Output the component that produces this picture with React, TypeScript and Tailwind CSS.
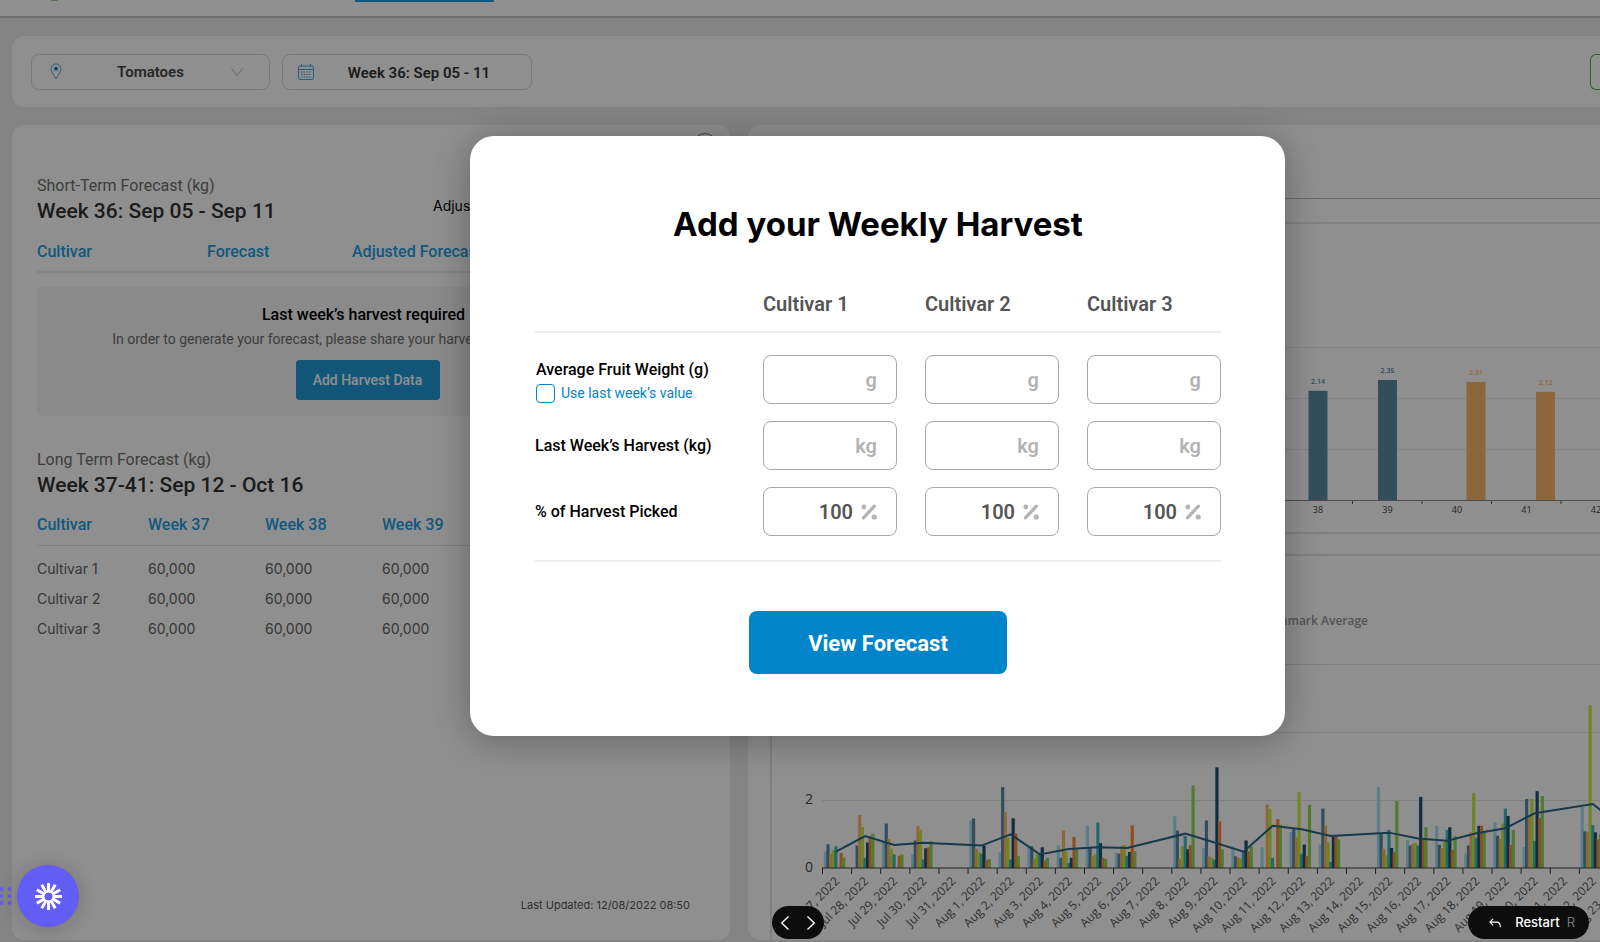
import React, { useState } from 'react';

const FONT_ROBOTO = "font-['Roboto','Liberation_Sans',sans-serif]";
const FONT_INTER = "font-['Inter','Liberation_Sans',sans-serif]";

const CULTIVARS = ['Cultivar 1', 'Cultivar 2', 'Cultivar 3'];
const WEEKS = ['Week 37', 'Week 38', 'Week 39', 'Week 40', 'Week 41'];

const SERIES_COLORS = ['#a6dff0', '#598ba6', '#fcb86b', '#c4ed3e', '#40bbc1', '#1e526e', '#ff8b3e', '#92da59'];

// one entry per day: value of every series, and the average line
const DAILY: { label: string; values: number[]; avg?: number }[] = [
    { label: 'Jul 27, 2022', values: [0.48, 0.7, 0.42, 0.52, 0.64, 0, 0.44, 0.3], avg: 0.48 },
    { label: 'Jul 28, 2022', values: [0, 0.66, 1.56, 1.2, 0.3, 0.75, 0.93, 1.01], avg: 0.94 },
    { label: 'Jul 29, 2022', values: [0.79, 1.31, 0.85, 0.57, 0.4, 0, 0.36, 0.4], avg: 0.68 },
    { label: 'Jul 30, 2022', values: [0.4, 0.81, 1.23, 1.13, 0.25, 0.58, 0.61, 0.79], avg: 0.74 },
    { label: 'Jul 31, 2022', values: [] },
    { label: 'Aug 1, 2022', values: [1.4, 1.46, 0.57, 0.48, 0.42, 0.66, 0.24, 0.26], avg: 0.66 },
    { label: 'Aug 2, 2022', values: [0.46, 2.38, 1.65, 0.89, 0.25, 1.46, 1.01, 0.36], avg: 0.99 },
    { label: 'Aug 3, 2022', values: [0.64, 0.64, 0.26, 0.4, 0.4, 0.61, 0.22, 0.3], avg: 0.4 },
    { label: 'Aug 4, 2022', values: [0.67, 0.3, 1.1, 0.48, 0.15, 0.3, 0.91, 0.54], avg: 0.56 },
    { label: 'Aug 5, 2022', values: [1.25, 0.6, 0.34, 0.4, 1.34, 0.73, 0.3, 0.27], avg: 0.61 },
    { label: 'Aug 6, 2022', values: [0.45, 0.42, 0.64, 0.67, 0.36, 0.47, 1.25, 0.49], avg: 0.59 },
    { label: 'Aug 7, 2022', values: [] },
    { label: 'Aug 8, 2022', values: [1.52, 1.1, 0.27, 0.64, 0.94, 0.55, 0.67, 2.43], avg: 1.01 },
    { label: 'Aug 9, 2022', values: [0.58, 1.4, 0.34, 0.3, 0.25, 2.96, 1.37, 0.55], avg: 0.75 },
    { label: 'Aug 10, 2022', values: [0.64, 0.34, 0.3, 0.27, 0.48, 0.81, 0.49, 0.64], avg: 0.48 },
    { label: 'Aug 11, 2022', values: [0.61, 0, 1.86, 1.74, 0.3, 0, 1.44, 1.27], avg: 1.24 },
    { label: 'Aug 12, 2022', values: [1.06, 1.16, 0.91, 2.23, 0.42, 0.69, 0.36, 1.86], avg: 1.14 },
    { label: 'Aug 13, 2022', values: [0.69, 1.75, 1.25, 0.76, 0.18, 0.92, 0.92, 0.84], avg: 0.94 },
    { label: 'Aug 14, 2022', values: [] },
    { label: 'Aug 15, 2022', values: [2.38, 1.02, 0.56, 0.37, 1.12, 0.59, 0.47, 1.97], avg: 1.04 },
    { label: 'Aug 16, 2022', values: [0.82, 0.66, 0.71, 0.74, 0.66, 2.09, 0.84, 1.2], avg: 0.87 },
    { label: 'Aug 17, 2022', values: [1.24, 0.68, 0.59, 0.8, 1.12, 1.2, 0.53, 0.94], avg: 0.8 },
    { label: 'Aug 18, 2022', values: [0.43, 0.66, 1.05, 2.21, 0.89, 1.24, 1.24, 1.05], avg: 1.02 },
    { label: 'Aug 19, 2022', values: [1.34, 0.95, 0.86, 1.31, 1.75, 1.53, 0.68, 1.12], avg: 1.17 },
    { label: 'Aug 20, 2022', values: [0.62, 2.03, 1.51, 2.03, 0.8, 2.26, 1.48, 2.12], avg: 1.61 },
    { label: 'Aug 21, 2022', values: [] },
    { label: 'Aug 22, 2022', values: [1.8, 1.08, 1.05, 4.79, 1.26, 1.05, 0.84, 1], avg: 1.88 },
    { label: 'Aug 23, 2022', values: [], avg: 1.2 },
];

const WEEKLY = [
    { week: 38, value: 2.14, color: '#598ba6', shift: 0 },
    { week: 39, value: 2.35, color: '#598ba6', shift: 0 },
    { week: 40, value: 2.31, color: '#fcb86b', shift: 19 },
    { week: 41, value: 2.12, color: '#fcb86b', shift: 19 },
    { week: 42, value: 0, color: '#fcb86b', shift: 19 },
];

const WeeklyChart = () => {
    const axisY = 277;
    const unit = 51;
    return (
        <svg className="block h-[308px] w-full font-['Open_Sans','Noto_Sans',sans-serif]" role="img" aria-label="Weekly yield">
            {[1, 2, 3].map(v => (
                <line key={v} x1="50" x2="100%" y1={axisY - v * unit - 0.5} y2={axisY - v * unit - 0.5} stroke="#eaeaea" />
            ))}
            {WEEKLY.map((w, i) => {
                const cx = 546 + i * 69.5;
                const h = w.value * (unit + 0.5);
                return (
                    <g key={w.week}>
                        {w.value > 0 && (
                            <>
                                <rect x={cx - 9.5 + w.shift} y={axisY - h} width="19" height={h} fill={w.color} />
                                <text x={cx + w.shift} y={axisY - h - 7} fontSize="7" fontWeight="600" textAnchor="middle" fill={w.color}>{w.value}</text>
                            </>
                        )}
                        <line x1={cx + 34.5} x2={cx + 34.5} y1={axisY} y2={axisY + 3} stroke="#555" />
                        <text x={cx} y={axisY + 12} fontSize="9" fontWeight="500" textAnchor="middle" fill="#444">{w.week}</text>
                    </g>
                );
            })}
            <line x1="50" x2="100%" y1={axisY - 0.5} y2={axisY - 0.5} stroke="#8a8a8a" />
        </svg>
    );
};

const DailyChart = () => {
    const axisY = 312;
    const unit = 34;
    const x0 = 50;
    const step = 29.11;
    const linePoints = DAILY
        .map((d, i) => (d.avg === undefined ? null : `${x0 + i * step + 14},${axisY - d.avg * unit}`))
        .filter(Boolean)
        .join(' ');

    return (
        <svg className="block h-[384px] w-full font-['Open_Sans','Noto_Sans',sans-serif]" role="img" aria-label="Daily harvest against benchmark average">
            <text x="596" y="69" fontSize="12" textAnchor="end" fill="#969696" fontWeight="600">Benchmark Average</text>
            {[2, 4, 6].map(v => (
                <line key={v} x1={x0} x2="100%" y1={axisY - v * unit + 0.5} y2={axisY - v * unit + 0.5} stroke="#e2e2e2" />
            ))}
            {[0, 2, 4, 6].map(v => (
                <text key={v} x="41" y={axisY - v * unit + 4} fontSize="14" textAnchor="end" fill="#444">{v}</text>
            ))}
            {DAILY.map((d, i) => (
                <g key={d.label}>
                    {d.values.map((v, s) => (
                        <rect key={s} x={x0 + i * step + 1.8 + s * 2.62} y={axisY - v * unit} width="3.2" height={v * unit} fill={SERIES_COLORS[s]} />
                    ))}
                    <line x1={x0 + i * step + 0.5} x2={x0 + i * step + 0.5} y1={axisY} y2={axisY + 6} stroke="#333" />
                    <text
                        transform={`translate(${x0 + i * step + 18} ${axisY + 14}) rotate(-45)`}
                        fontSize="12"
                        textAnchor="end"
                        fill="#555"
                    >
                        {d.label}
                    </text>
                </g>
            ))}
            <line x1={x0} x2="100%" y1={axisY} y2={axisY} stroke="#444" />
            <polyline points={linePoints} fill="none" stroke="#2b6685" strokeWidth="2" />
        </svg>
    );
};

const PinIcon = () => (
    <svg width="12" height="17" viewBox="0 0 12 17" fill="none" aria-hidden="true">
        <path d="M6 16C4.6 12.8 1 9.4 1 5.9a5 5 0 0 1 10 0C11 9.4 7.4 12.8 6 16Z" stroke="#4fa8d8" />
        <circle cx="6" cy="5.7" r="1.9" fill="#0085ca" />
    </svg>
);

const CalendarIcon = () => (
    <svg width="16" height="16" viewBox="0 0 16 16" fill="none" stroke="#4fa8d8" aria-hidden="true">
        <rect x="0.5" y="2" width="15" height="13.5" rx="1.5" />
        <path d="M.5 5.5h15M3.5 0v3M12.5 0v3" />
        <path d="M3 8h10M3 10.5h10M3 13h10" strokeDasharray="1.5 1.2" />
    </svg>
);

const PercentIcon = () => (
    <svg width="16" height="16" viewBox="0 0 16 16" aria-hidden="true">
        <path d="M2.4 13.8 13.4 2.2" stroke="#b3b3b3" strokeWidth="3.2" strokeLinecap="round" />
        <circle cx="2.8" cy="3" r="2.4" fill="#b3b3b3" />
        <circle cx="13.2" cy="13" r="2.6" fill="#b3b3b3" />
    </svg>
);

const ForecastHeading = ({ kind, title }: { kind: string; title: string }) => (
    <div>
        <p className="text-base leading-5 text-[#6e6e6e]">{kind}</p>
        <h2 className="mt-px text-[21px] leading-7 font-medium text-[#333]">{title}</h2>
    </div>
);

const ForecastCard = ({ onAdd }: { onAdd: () => void }) => (
    <section className="relative flex min-w-0 flex-col rounded-xl bg-white pt-[51px] pr-8 pb-[27px] pl-[25px]">
        <button aria-label="Help" className="absolute top-2 right-3 size-[26px] rounded-full border border-[#777]" />
        <div className="flex items-center justify-between">
            <ForecastHeading kind="Short-Term Forecast (kg)" title="Week 36: Sep 05 - Sep 11" />
            <span className={`w-[265px] pt-2.5 text-sm text-black ${FONT_INTER}`}>Adjust Forecast</span>
        </div>
        <table className="mt-[17px] w-full table-fixed text-left">
            <thead>
                <tr className="border-b-2 border-[#ebebeb] text-base leading-5 text-[#1d9de0]">
                    <th className="w-[170px] pb-[9px] font-medium">Cultivar</th>
                    <th className="w-[145px] pb-[9px] font-medium">Forecast</th>
                    <th className="pb-[9px] font-medium">Adjusted Forecast</th>
                </tr>
            </thead>
        </table>
        <div className="mt-3.5 flex flex-col items-center rounded-md bg-[#f6f6f6] pt-[18px] pb-4">
            <div className="pr-2 text-center">
                <h3 className="text-base leading-5 font-medium text-black">Last week’s harvest required</h3>
                <p className="mt-1 text-sm leading-5 text-[#6e6e6e]">
                    In order to generate your forecast, please share your harvest data from last week.
                </p>
            </div>
            <button onClick={onAdd} className="mt-[11px] h-10 w-36 rounded bg-[#209ada] text-sm font-medium text-white">
                Add Harvest Data
            </button>
        </div>

        <div className="mt-[34px]">
            <ForecastHeading kind="Long Term Forecast (kg)" title="Week 37-41: Sep 12 - Oct 16" />
        </div>
        <table className="mt-4 w-full table-fixed text-left">
            <colgroup>
                <col className="w-[111px]" />
                <col className="w-[117px]" />
                <col className="w-[117px]" />
                <col className="w-[117px]" />
                <col className="w-[117px]" />
                <col />
            </colgroup>
            <thead>
                <tr className="border-b border-[#e2e2e2] text-base leading-5 text-[#1d9de0]">
                    <th className="pb-2.5 font-medium">Cultivar</th>
                    {WEEKS.map(week => (
                        <th key={week} className="pb-2.5 font-medium">{week}</th>
                    ))}
                </tr>
            </thead>
            <tbody className={`text-sm leading-5 text-[#626262] ${FONT_INTER}`}>
                <tr><td className="h-2" /></tr>
                {CULTIVARS.map(name => (
                    <tr key={name} className="h-[30px]">
                        <td>{name}</td>
                        {WEEKS.map(week => <td key={week}>60,000</td>)}
                    </tr>
                ))}
            </tbody>
        </table>
        <p className={`mt-auto pr-2 text-right text-[11px] leading-4 text-[#555] ${FONT_INTER}`}>
            Last Updated: 12/08/2022 08:50
        </p>
    </section>
);

interface HarvestRowProps {
    id: string;
    unit: React.ReactNode;
    value?: string;
    children: React.ReactNode;
}

const HarvestRow = ({ id, unit, value = '', children }: HarvestRowProps) => (
    <>
        {children}
        {CULTIVARS.map(name => (
            <div key={name} className="flex h-[49px] items-center gap-2 rounded-lg border border-[#a8a8a8] pr-[19px] text-xl font-semibold">
                <input
                    aria-labelledby={id}
                    defaultValue={value}
                    className="w-full min-w-0 bg-transparent text-right text-[#555] outline-none"
                />
                <span className="shrink-0 text-[#b3b3b3]">{unit}</span>
            </div>
        ))}
    </>
);

const HarvestModal = () => {
    const [useLast, setUseLast] = useState(false);
    return (
        <div className="absolute inset-0 flex items-start justify-center bg-black/44 pt-[136px] pl-[155px]">
            <div role="dialog" aria-labelledby="modal-title" className="w-[815px] rounded-3xl bg-white pt-[68px] pr-16 pb-[62px] pl-[65px] shadow-[0_4px_36px_rgba(0,0,0,0.3)]">
                <h1 id="modal-title" className={`text-center text-[33px] leading-10 font-bold text-black ${FONT_INTER}`}>
                    Add your Weekly Harvest
                </h1>
                <div className="mt-12 grid grid-cols-[1fr_134px_134px_134px] gap-x-7 border-b-2 border-[#ededed] pb-[15px]">
                    <span />
                    {CULTIVARS.map(name => (
                        <span key={name} className="text-xl leading-6 font-semibold text-[#555]">{name}</span>
                    ))}
                </div>
                <div className="grid grid-cols-[1fr_134px_134px_134px] items-center gap-x-7 gap-y-[17px] border-b-2 border-[#ededed] pt-[22px] pb-6 leading-5 text-black">
                    <HarvestRow id="fruit-weight" unit="g">
                        <div className="self-end pl-px">
                            <p id="fruit-weight" className="font-medium">Average Fruit Weight (g)</p>
                            <label className="mt-[3px] flex items-center gap-1.5 pb-px text-sm text-[#0085ca]">
                                <input
                                    type="checkbox"
                                    checked={useLast}
                                    onChange={e => setUseLast(e.target.checked)}
                                    className="size-[19px] appearance-none rounded-sm border border-[#0085ca] checked:bg-[#0085ca]"
                                />
                                Use last week’s value
                            </label>
                        </div>
                    </HarvestRow>
                    <HarvestRow id="last-harvest" unit="kg">
                        <p id="last-harvest" className="font-medium">Last Week’s Harvest (kg)</p>
                    </HarvestRow>
                    <HarvestRow id="picked" unit={<PercentIcon />} value="100">
                        <p id="picked" className="font-medium">% of Harvest Picked</p>
                    </HarvestRow>
                </div>
                <button className="mx-auto mt-[49px] block h-[63px] w-[258px] rounded-lg bg-[#0085ca] pt-0.5 text-[22px] font-bold text-white">
                    View Forecast
                </button>
            </div>
        </div>
    );
};

const RAYS = Array.from({ length: 12 }, (_, i) => i * 30);

const RecorderWidget = () => (
    <div className="absolute bottom-[15px] left-0 flex items-center gap-[5px]">
        <svg width="12" height="18" viewBox="0 0 12 18" fill="#625df5" aria-hidden="true">
            {[2, 9, 16].map(y => (
                <g key={y}>
                    <circle cx="1.5" cy={y} r="2" />
                    <circle cx="9.5" cy={y} r="2" />
                </g>
            ))}
        </svg>
        <button aria-label="Recorder" className="flex size-[62px] items-center justify-center rounded-full bg-[#625df5] shadow-[0_2px_20px_rgba(0,0,0,0.2)]">
            <svg width="27" height="27" viewBox="-12 -12 24 24" aria-hidden="true">
                {RAYS.map(a => (
                    <line key={a} x1="0" y1="-3.8" x2="0" y2="-12" stroke="#fff" strokeWidth="2.6" transform={`rotate(${a})`} />
                ))}
                <circle r="4.4" fill="none" stroke="#fff" strokeWidth="1.5" />
            </svg>
        </button>
    </div>
);

const PrototypeControls = () => (
    <>
        <div className="absolute bottom-[3px] left-[772px] flex h-[33px] items-center gap-[18px] rounded-full bg-[#0d0d0d] px-[9px]">
            <button aria-label="Previous">
                <svg width="8" height="14" viewBox="0 0 8 14" fill="none" stroke="#fff" strokeWidth="1.3"><path d="M7.5.5.8 7l6.7 6.5" /></svg>
            </button>
            <button aria-label="Next">
                <svg width="8" height="14" viewBox="0 0 8 14" fill="none" stroke="#fff" strokeWidth="1.3"><path d="M.5.5 7.2 7 .5 13.5" /></svg>
            </button>
        </div>
        <button className={`absolute right-[11px] bottom-[3px] flex h-[33px] items-center rounded-full bg-[#0d0d0d] pr-[14px] pl-[21px] text-[13px] font-medium text-white ${FONT_INTER}`}>
            <svg width="12" height="10" viewBox="0 0 13 10" fill="none" stroke="#fff" strokeWidth="1.2" aria-hidden="true">
                <path d="M4.5.5 1 4l3.5 3.5M1 4h7.5C11 4 12.3 5.5 12.3 9.5" />
            </svg>
            <span className="ml-3.5">Restart</span>
            <span className="ml-[7px] font-normal text-[#777]">R</span>
        </button>
    </>
);

export default function App() {
    const [isModalOpen, setIsModalOpen] = useState(true);

    return (
        <div className={`relative flex h-screen flex-col overflow-hidden bg-[#ececec] ${FONT_ROBOTO}`}>
            <header className="flex h-[18px] shrink-0 border-b-2 border-[#c4c4c4] bg-white">
                <span className="ml-[51px] h-px w-[7px] rounded-b bg-[#8cc98c]" />
                <span className="ml-[297px] h-0.5 w-[139px] bg-[#1d9de0]" />
            </header>

            <main className="flex min-h-0 grow flex-col gap-[18px] pt-[18px] pb-0.5 pl-3">
                {/* Filters */}
                <div className="flex h-[71px] shrink-0 items-center gap-3 rounded-l-xl bg-white pl-[19px]">
                    <div className="flex h-9 w-[239px] items-center rounded-lg border border-[#d8d8d8] px-[18px]">
                        <PinIcon />
                        <select aria-label="Crop" className="grow appearance-none bg-transparent pt-0.5 pl-2 text-[15px] font-semibold text-[#444] [text-align-last:center]">
                            <option>Tomatoes</option>
                        </select>
                        <svg width="12" height="8" viewBox="0 0 12 8" fill="none" stroke="#bdbdbd" className="mr-2" aria-hidden="true">
                            <path d="M.5.5 6 7.5 11.5.5" />
                        </svg>
                    </div>
                    <button className="flex h-9 w-[250px] items-center rounded-lg border border-[#d8d8d8] px-[15px] text-[15px] font-semibold text-[#333]">
                        <CalendarIcon />
                        <span className="grow pt-1 pl-2">Week 36: Sep 05 - 11</span>
                    </button>
                    <button aria-label="Export" className="ml-auto h-9 w-2.5 rounded-l-md border border-r-0 border-[#4fb457]" />
                </div>

                <div className="grid min-h-0 grow grid-cols-[718fr_852fr] gap-[18px]">
                    <ForecastCard onAdd={() => setIsModalOpen(true)} />
                    <section className="min-w-0 overflow-hidden rounded-l-xl bg-white pl-[22px]">
                        <div className="h-[74px] border-b border-[#bdbdbd]" />
                        <div className="mt-[23px] border-2 border-r-0 border-[#e4e4e4]">
                            <WeeklyChart />
                        </div>
                        <div className="mt-5 border-2 border-r-0 border-b-0 border-[#e4e4e4]">
                            <DailyChart />
                        </div>
                    </section>
                </div>
            </main>

            {isModalOpen && <HarvestModal />}
            <RecorderWidget />
            <PrototypeControls />
        </div>
    );
}
